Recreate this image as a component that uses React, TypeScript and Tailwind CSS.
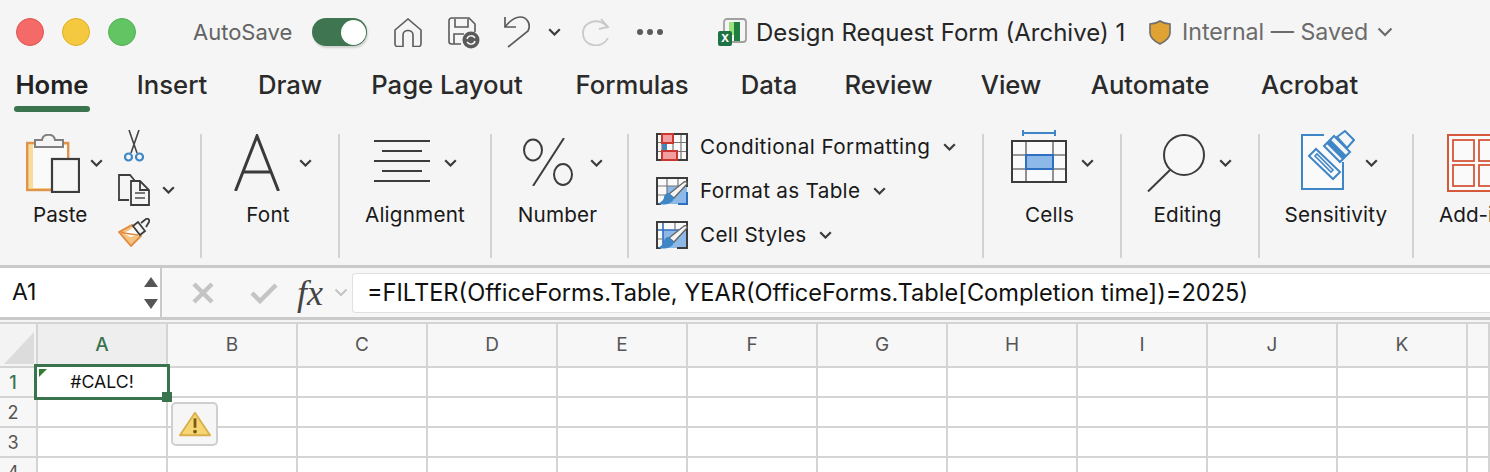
import type { ReactNode } from 'react'

const tabs = [
  { label: 'Home', width: 'w-[74px]', gap: 'ml-0', active: true },
  { label: 'Insert', width: 'w-[72px]', gap: 'ml-[47px]' },
  { label: 'Draw', width: 'w-[62px]', gap: 'ml-[51px]' },
  { label: 'Page Layout', width: 'w-[152px]', gap: 'ml-[50px]' },
  { label: 'Formulas', width: 'w-[114px]', gap: 'ml-[52px]' },
  { label: 'Data', width: 'w-[56px]', gap: 'ml-[52px]' },
  { label: 'Review', width: 'w-[87px]', gap: 'ml-[48px]' },
  { label: 'View', width: 'w-[60px]', gap: 'ml-[49px]' },
  { label: 'Automate', width: 'w-[120px]', gap: 'ml-[49px]' },
  { label: 'Acrobat', width: 'w-[97px]', gap: 'ml-[51px]' },
]

const columns = ['A', 'B', 'C', 'D', 'E', 'F', 'G', 'H', 'I', 'J', 'K', '']

function Chevron({ className = '' }: { className?: string }) {
  return (
    <svg viewBox="0 0 13 8" className={`h-[8px] w-[13px] shrink-0 ${className}`} fill="none" stroke="#3c3c3c" strokeWidth="2.2">
      <path d="M1.2 1.2 6.5 6.5l5.3-5.3" />
    </svg>
  )
}

function Divider() {
  return <div className="h-[124px] w-[2px] shrink-0 bg-[#d2d2d2]" />
}

function RibbonGroup({ width, label, iconClass, labelClass = '', icon, chevronGap }: {
  width: string
  label: string
  iconClass: string
  labelClass?: string
  icon: ReactNode
  chevronGap: string
}) {
  return (
    <div className={`flex shrink-0 flex-col ${width}`}>
      <div className={`flex h-[68px] items-start ${iconClass}`}>
        {icon}
        <Chevron className={`mt-[25px] ${chevronGap}`} />
      </div>
      <span className={`text-center text-[20.7px] leading-[26px] tracking-[0.2px] text-[#1a1a1a] ${labelClass}`}>{label}</span>
    </div>
  )
}

function StyleRow({ icon, label, tracking = 'tracking-[0.3px]' }: { icon: ReactNode; label: string; tracking?: string }) {
  return (
    <div className="flex h-[44px] items-center">
      {icon}
      <span className={`ml-[12px] whitespace-nowrap text-[20.7px] leading-[26px] text-[#1a1a1a] ${tracking}`}>{label}</span>
      <Chevron className="ml-[13px]" />
    </div>
  )
}

function PasteIcon() {
  return (
    <svg viewBox="0 0 54 59" className="h-[59px] w-[54px] shrink-0">
      <rect x="1.2" y="9" width="41" height="47" fill="#f7dc9c" stroke="#e2934a" strokeWidth="2.4" />
      <rect x="7" y="11" width="34" height="43" fill="#fafafa" />
      <path d="M9 13V6h7c1-7 12-7 13 0h8v7z" fill="#f5f5f5" stroke="#808080" strokeWidth="2" />
      <rect x="26" y="25" width="27" height="33" fill="#f7f7f7" stroke="#3c3c3c" strokeWidth="2.2" />
    </svg>
  )
}

function ScissorsIcon() {
  return (
    <svg viewBox="0 0 20 32" className="h-[32px] w-[20px]" fill="none">
      <path d="M5 0 13 23M15 0 7 23" stroke="#444" strokeWidth="1.6" />
      <circle cx="4.5" cy="27" r="3.5" stroke="#3f86c7" strokeWidth="2.2" fill="#f5f5f5" />
      <circle cx="15.5" cy="27" r="3.5" stroke="#3f86c7" strokeWidth="2.2" fill="#f5f5f5" />
    </svg>
  )
}

function CopyIcon() {
  return (
    <svg viewBox="0 0 32 32" className="h-[32px] w-[32px] shrink-0" fill="none" stroke="#3c3c3c" strokeWidth="1.8">
      <path d="M11 26H1V1h11l5 6" />
      <path d="M13 7h9l9 9v15H13z" fill="#f5f5f5" />
      <path d="M22 7v9h9" />
      <path d="M17 19h10M17 24h10" stroke="#777" strokeWidth="2" />
    </svg>
  )
}

function BrushIcon() {
  return (
    <svg viewBox="0 0 32 29" className="h-[29px] w-[32px]" fill="none">
      <path d="M1 14 14 7l9 11-10 10z" fill="#f5c27f" stroke="#e2893f" strokeWidth="1.8" />
      <path d="M3 14c5 1 8-1 12-5l6 8-9 2z" fill="#fbfbfb" />
      <path d="M3 14c5 2 12 2 17 3" stroke="#e2893f" strokeWidth="1.6" />
      <path d="m15 8 5-4 7 9-5 4z" fill="#f5f5f5" stroke="#3c3c3c" strokeWidth="1.8" />
      <path d="m23 5 5-4c2-1 4 1 3 3l-3 5" fill="#f5f5f5" stroke="#3c3c3c" strokeWidth="1.8" />
    </svg>
  )
}

function BigA() {
  return (
    <svg viewBox="0 0 46 57" className="h-[57px] w-[46px] shrink-0" fill="none" stroke="#3a3a3a" strokeWidth="3">
      <path d="M1.5 57 23 2l21.5 55M8 38h30" />
    </svg>
  )
}

function AlignIcon() {
  return (
    <svg viewBox="0 0 56 42" className="mt-[6px] h-[42px] w-[56px] shrink-0" stroke="#3c3c3c" strokeWidth="2">
      <path d="M0 1h56M8 11h40M0 21h56M8 31h40M0 41h56" />
    </svg>
  )
}

function PercentIcon() {
  return (
    <svg viewBox="0 0 50 48" className="mt-[4px] h-[48px] w-[50px] shrink-0" fill="none" stroke="#3c3c3c" strokeWidth="2">
      <ellipse cx="10" cy="12" rx="9" ry="10.5" />
      <ellipse cx="40" cy="36.5" rx="9" ry="10.5" />
      <path d="M41 0 10 48" />
    </svg>
  )
}

function CondIcon() {
  return (
    <svg viewBox="0 0 32 28" className="h-[28px] w-[32px] shrink-0">
      <rect x="1" y="1" width="30" height="26" fill="#fafafa" />
      <rect x="6" y="9" width="5" height="10" fill="#3f86c7" />
      <path d="M1 9.5h30M1 18.5h30M6 1v26M17 1v26M25 1v26" stroke="#777" strokeWidth="1.2" fill="none" />
      <rect x="1" y="1" width="30" height="26" fill="none" stroke="#3c3c3c" strokeWidth="2" />
      <rect x="6" y="1" width="11" height="9" fill="#f29ea1" stroke="#c8382e" strokeWidth="2" />
      <rect x="6" y="18" width="15" height="9" fill="#f29ea1" stroke="#c8382e" strokeWidth="2" />
    </svg>
  )
}

function TableBrushIcon({ cellStyle }: { cellStyle?: boolean }) {
  return (
    <svg viewBox="0 0 32 28" className="h-[28px] w-[32px] shrink-0">
      <rect x="1" y="1" width="30" height="26" fill="#fafafa" />
      {cellStyle ? (
        <>
          <rect x="7" y="9" width="24" height="18" fill="#8db9e8" />
          <path d="M1 9h30M7 1v26" stroke="#2f6fbf" strokeWidth="1.6" fill="none" />
          <path d="M7 18H1M19 1v8" stroke="#777" strokeWidth="1.2" fill="none" />
          <path d="M5 27H1V1h30v26h-10" stroke="#3c3c3c" strokeWidth="2" fill="none" />
        </>
      ) : (
        <>
          <rect x="11" y="9" width="20" height="18" fill="#8db9e8" />
          <path d="M1 9h30M1 18h10M11 1v26M22 1v8" stroke="#777" strokeWidth="1.2" fill="none" />
          <path d="M5 27H1V1h30v9" stroke="#3c3c3c" strokeWidth="2" fill="none" />
          <path d="M31 15v12h-9" stroke="#2f6fbf" strokeWidth="2" fill="none" />
        </>
      )}
      <path d="m13 17 15-12c2-1 3 0 3 2L18 21z" fill="#f5f5f5" stroke="#666" strokeWidth="1.4" />
      <path d="M13 16c-3 0-5 2-5 5-1 3-4 4-6 6 6 1.5 15 0 16-6z" fill="#3f86c7" />
    </svg>
  )
}

function CellsIcon() {
  return (
    <svg viewBox="0 0 56 53" className="mt-[-4px] h-[53px] w-[56px] shrink-0" fill="none">
      <path d="M12 3h32M12 0v6M44 0v6" stroke="#3f86c7" strokeWidth="2" />
      <rect x="1" y="11" width="54" height="41" fill="#fafafa" />
      <rect x="15" y="25" width="27" height="14" fill="#8db9e8" />
      <path d="M1 25h54M1 39h54M15 11v41M42 11v41" stroke="#777" strokeWidth="1.6" />
      <rect x="15" y="25" width="27" height="14" stroke="#2f6fbf" strokeWidth="2" />
      <rect x="1" y="11" width="54" height="41" stroke="#3c3c3c" strokeWidth="2" />
    </svg>
  )
}

function SearchIcon() {
  return (
    <svg viewBox="0 0 58 58" className="h-[58px] w-[58px] shrink-0" fill="none" stroke="#3c3c3c">
      <circle cx="37" cy="21" r="20" fill="#f7f7f7" strokeWidth="2" />
      <path d="M23 36 1 57.5" strokeWidth="2" />
    </svg>
  )
}

function SensitivityIcon() {
  return (
    <svg viewBox="0 0 54 60" className="mt-[-4px] h-[60px] w-[54px] shrink-0" fill="none" stroke="#3f86c7">
      <path d="M23 5H1v54h41V32" fill="#fafafa" strokeWidth="2" />
      <path d="m8 26 7-7 24 23-7 7z" fill="#fafafa" strokeWidth="2" />
      <path d="m14 26 2-2 16 16-2 2z" strokeWidth="1.6" />
      <path d="m23 16 10-10 16 16-10 10z" fill="#f5f5f5" strokeWidth="2" />
      <path d="m27.5 11.5 16 16" strokeWidth="6" />
      <path d="m36 7 8-6 9 9-7 8z" fill="#f5f5f5" strokeWidth="2" />
    </svg>
  )
}

function AddInsIcon() {
  return (
    <svg viewBox="0 0 60 58" className="h-[58px] w-[60px] shrink-0" fill="#fafafa" stroke="#d4583a">
      <rect x="1" y="1" width="58" height="56" strokeWidth="2" />
      <rect x="6" y="6" width="21" height="21" strokeWidth="1.8" />
      <rect x="32" y="6" width="21" height="21" strokeWidth="1.8" />
      <rect x="6" y="31" width="21" height="21" strokeWidth="1.8" />
      <rect x="32" y="31" width="21" height="21" strokeWidth="1.8" />
    </svg>
  )
}

function TitleBar() {
  return (
    <div className="flex h-[64px] items-center pl-[16px]">
      <div className="h-[28px] w-[28px] rounded-full border border-[#e0534c] bg-[#f36a68]" />
      <div className="ml-[18px] h-[28px] w-[28px] rounded-full border border-[#e2ac28] bg-[#f5c93f]" />
      <div className="ml-[18px] h-[28px] w-[28px] rounded-full border border-[#4fb052] bg-[#62c463]" />
      <span className="ml-[57px] w-[100px] whitespace-nowrap text-[22px] text-[#636363]">AutoSave</span>
      <div className="ml-[19px] flex h-[28px] w-[55px] items-center justify-end rounded-full bg-[#3f7651] pr-[1px] shadow-[1px_2px_2px_rgba(0,0,0,0.15)]">
        <div className="h-[25px] w-[25px] rounded-full bg-white" />
      </div>
      <svg viewBox="0 0 28 29" className="ml-[27px] h-[29px] w-[28px]" fill="none" stroke="#5b5b5b" strokeWidth="1.6">
        <path d="M1 12 14 1l13 11v14a2.5 2.5 0 0 1-2.5 2.5H19V17c0-6-10-6-10 0v11.5H3.5A2.5 2.5 0 0 1 1 26z" />
      </svg>
      <svg viewBox="0 0 32 32" className="ml-[26px] mt-[2px] h-[32px] w-[32px]" fill="none" stroke="#5b5b5b" strokeWidth="1.6">
        <path d="M13 27H3.500A2.5 2.5 0 0 1 1 24.5v-21A2.5 2.5 0 0 1 3.5 1H21l6 6v8" />
        <path d="M7 2v8h13V2M6 27V17h10" />
        <circle cx="23" cy="23" r="8.5" fill="#5b5b5b" stroke="none" />
        <path d="M19 22c1-4 6-4 8-1M27 24c-1 4-6 4-8 1" stroke="#f5f5f5" strokeWidth="1.5" />
      </svg>
      <svg viewBox="0 0 28 32" className="ml-[23px] h-[32px] w-[28px]" fill="none" stroke="#5b5b5b" strokeWidth="1.7">
        <path d="M2 1v10h11" />
        <path d="M2 11c4-5 9-10 15-10 8 0 11 8 8 14L5 31" />
      </svg>
      <Chevron className="ml-[17px]" />
      <svg viewBox="0 0 28 28" className="ml-[21px] h-[28px] w-[28px]" fill="none" stroke="#c9c9c9" strokeWidth="1.8">
        <path d="M26 10C20-1 1 2 1 15c0 15 20 16 25 5" />
        <path d="M19 1l7 8-9 2" />
      </svg>
      <div className="ml-[27px] flex gap-[4px]">
        <div className="h-[6px] w-[6px] rounded-full bg-[#5b5b5b]" />
        <div className="h-[6px] w-[6px] rounded-full bg-[#5b5b5b]" />
        <div className="h-[6px] w-[6px] rounded-full bg-[#5b5b5b]" />
      </div>
      <div className="relative ml-[55px] h-[28px] w-[29px]">
        <svg viewBox="0 0 29 28" className="h-[28px] w-[29px]">
          <rect x="6" y="1" width="22" height="23" rx="3" fill="#f5f5f5" stroke="#a0a0a0" strokeWidth="1.8" />
          <rect x="11" y="4" width="11" height="13" fill="#9be27e" />
          <rect x="16" y="4" width="6" height="19" fill="#1f7f42" />
        </svg>
        <span className="absolute bottom-0 left-0 flex h-[15px] w-[14px] items-center justify-center rounded-[2px] bg-[#1f7244] text-[11px] font-bold text-white">X</span>
      </div>
      <span className="ml-[9px] mt-[2px] w-[369px] whitespace-nowrap text-[24px] text-[#262626]">Design Request Form (Archive) 1</span>
      <svg viewBox="0 0 22 25" className="ml-[24px] h-[25px] w-[22px]">
        <path d="M11 1c3 2 6 3 10 3v9c0 6-6 9-10 11-4-2-10-5-10-11V4c4 0 7-1 10-3z" fill="#dfa233" stroke="#6e6e6e" strokeWidth="1.6" />
      </svg>
      <span className="ml-[11px] mt-[1px] w-[186px] whitespace-nowrap text-[23.2px] text-[#6b6b6b]">Internal — Saved</span>
      <svg viewBox="0 0 16 10" className="ml-[9px] h-[10px] w-[16px]" fill="none" stroke="#6b6b6b" strokeWidth="2.2">
        <path d="m1.5 1.5 6.5 6.5 6.5-6.5" />
      </svg>
    </div>
  )
}

function TabBar() {
  return (
    <div className="flex h-[50px] items-start pl-[15px]">
      {tabs.map((t) => (
        <div key={t.label} className={`flex shrink-0 flex-col items-center ${t.width} ${t.gap}`}>
          <span className={`whitespace-nowrap text-[25.7px] leading-[42px] ${t.active ? 'font-semibold text-[#222]' : 'font-medium text-[#2a2a2a]'}`}>{t.label}</span>
          {t.active && <div className="h-[6px] w-[76px] shrink-0 rounded-full bg-[#39744e]" />}
        </div>
      ))}
    </div>
  )
}

function Ribbon() {
  return (
    <div className="flex h-[154px] items-start overflow-hidden border-b-[3px] border-[#cacaca] pt-[20px]">
      <div className="flex w-[200px] shrink-0 items-start">
        <div className="ml-[26px] flex w-[76px] shrink-0 flex-col">
          <div className="flex h-[68px] items-start">
            <PasteIcon />
            <Chevron className="ml-[10px] mt-[25px]" />
          </div>
          <span className="ml-[7px] text-[20.7px] leading-[26px] text-[#1a1a1a]">Paste</span>
        </div>
        <div className="ml-[16px] flex flex-col items-start">
          <div className="ml-[6px] mt-[-4px]"><ScissorsIcon /></div>
          <div className="mt-[12px] flex items-center">
            <CopyIcon />
            <Chevron className="ml-[12px]" />
          </div>
          <div className="mt-[12px]"><BrushIcon /></div>
        </div>
      </div>
      <Divider />
      <RibbonGroup width="w-[136px]" label="Font" iconClass="pl-[32px]" labelClass="pr-[4px]" chevronGap="ml-[19px]" icon={<BigA />} />
      <Divider />
      <RibbonGroup width="w-[150px]" label="Alignment" iconClass="pl-[34px]" chevronGap="ml-[14px]" icon={<AlignIcon />} />
      <Divider />
      <RibbonGroup width="w-[135px]" label="Number" iconClass="pl-[31px]" labelClass="pr-[4px]" chevronGap="ml-[17px]" icon={<PercentIcon />} />
      <Divider />
      <div className="mt-[-9px] flex w-[353px] shrink-0 flex-col pl-[27px]">
        <StyleRow icon={<CondIcon />} label="Conditional Formatting" tracking="tracking-[0.43px]" />
        <StyleRow icon={<TableBrushIcon />} label="Format as Table" />
        <StyleRow icon={<TableBrushIcon cellStyle />} label="Cell Styles" />
      </div>
      <Divider />
      <RibbonGroup width="w-[136px]" label="Cells" iconClass="pl-[27px]" labelClass="pr-[5px]" chevronGap="ml-[14px]" icon={<CellsIcon />} />
      <Divider />
      <RibbonGroup width="w-[136px]" label="Editing" iconClass="pl-[25px]" labelClass="pr-[5px]" chevronGap="ml-[14px]" icon={<SearchIcon />} />
      <Divider />
      <RibbonGroup width="w-[152px]" label="Sensitivity" iconClass="pl-[41px]" chevronGap="ml-[10px]" icon={<SensitivityIcon />} />
      <Divider />
      <div className="flex shrink-0 flex-col pl-[25px]">
        <div className="flex h-[68px] items-start pl-[8px]"><AddInsIcon /></div>
        <span className="whitespace-nowrap text-[20.7px] leading-[26px] text-[#1a1a1a]">Add-ins</span>
      </div>
    </div>
  )
}

function FormulaBar() {
  return (
    <div className="flex h-[52px] items-stretch border-b-[3px] border-[#cacaca] bg-[#f7f7f7]">
      <div className="flex w-[162px] shrink-0 items-center justify-between border-r-[2px] border-[#cacaca] bg-white pl-[12px] pr-[2px]">
        <span className="text-[23px] text-[#111]">A1</span>
        <div className="flex flex-col gap-[12px]">
          <div className="h-0 w-0 border-x-[7px] border-b-[10px] border-x-transparent border-b-[#555]" />
          <div className="h-0 w-0 border-x-[7px] border-t-[10px] border-x-transparent border-t-[#555]" />
        </div>
      </div>
      <div className="flex flex-1 items-center pl-[30px]">
        <svg viewBox="0 0 22 22" className="h-[22px] w-[22px]" stroke="#c4c4c4" strokeWidth="4.5">
          <path d="m2 2 18 18M20 2 2 20" />
        </svg>
        <svg viewBox="0 0 28 22" className="ml-[36px] h-[22px] w-[28px]" fill="none" stroke="#c4c4c4" strokeWidth="4.5">
          <path d="m2 11 8 8L26 3" />
        </svg>
        <span className="ml-[19px] w-[28px] font-['Liberation_Serif',serif] text-[36px] italic leading-none text-[#444]">fx</span>
        <svg viewBox="0 0 14 9" className="ml-[9px] h-[9px] w-[14px]" fill="none" stroke="#c4c4c4" strokeWidth="2">
          <path d="M1.5 1.5 7 7l5.5-5.5" />
        </svg>
        <div className="ml-[4px] flex h-[40px] flex-1 items-center rounded-l-[4px] border-y border-l border-[#e0e0e0] bg-white pl-[14px]">
          <span className="whitespace-nowrap text-[23.6px] text-[#111]">=FILTER(OfficeForms.Table, YEAR(OfficeForms.Table[Completion time])=2025)</span>
        </div>
      </div>
    </div>
  )
}

function Sheet() {
  return (
    <div className="relative mt-[2px] grid grid-cols-[38px_repeat(11,130px)_1fr] grid-rows-[44px_30px_30px_30px_30px] border-t-[2px] border-[#d4d4d4] bg-white">
      <div className="flex items-end justify-end border-b-[2px] border-r-[2px] border-[#d4d4d4] bg-[#f3f3f3] p-[2px]">
        <div className="h-[32px] w-[30px] bg-[#dcdcdc] [clip-path:polygon(100%_0,100%_100%,0_100%)]" />
      </div>
      {columns.map((c, i) => (
        <div key={c || 'end'} className={`flex items-center justify-center border-b-[2px] border-r-[2px] border-[#d4d4d4] text-[19px] ${i === 0 ? 'bg-[#eeeeee] font-medium text-[#39744e]' : 'bg-[#f7f7f7] text-[#555]'}`}>
          {c}
        </div>
      ))}
      {[1, 2, 3, 4].map((row) => (
        <div key={row} className="contents">
          <div className={`flex items-center justify-center border-b-[2px] border-r-[2px] border-[#d4d4d4] bg-[#f7f7f7] pr-[10px] text-[18px] ${row === 1 ? 'font-medium text-[#39744e]' : 'text-[#555]'}`}>
            {row}
          </div>
          {columns.map((c) => (
            <div key={c} className="border-b-[2px] border-r-[2px] border-[#d4d4d4]" />
          ))}
        </div>
      ))}
      {/* selected cell and error badge sit on top of the grid */}
      <div className="absolute left-[34px] top-[40px] flex h-[36px] w-[136px] items-center justify-center border-[3px] border-[#39744e] bg-white">
        <span className="text-[17.7px] text-[#111]">#CALC!</span>
        <div className="absolute left-[2px] top-[2px] h-[8px] w-[8px] bg-[#2f7d32] [clip-path:polygon(0_0,100%_0,0_100%)]" />
        <div className="absolute bottom-[-5px] right-[-5px] h-[10px] w-[10px] bg-[#39744e]" />
      </div>
      <div className="absolute left-[171px] top-[78px] flex h-[44px] w-[47px] items-center justify-center rounded-[5px] border-[2px] border-[#cfcfcf] bg-[#f6f6f6]">
        <svg viewBox="0 0 34 28" className="h-[28px] w-[32px]">
          <path d="M17 2 33 26H1z" fill="#f6d673" stroke="#d9b04e" strokeWidth="2" strokeLinejoin="round" />
          <path d="M17 8v10" stroke="#7a5a12" strokeWidth="3" />
          <circle cx="17" cy="22" r="2" fill="#7a5a12" />
        </svg>
      </div>
    </div>
  )
}

export default function App() {
  return (
    <div className="h-[472px] w-full overflow-hidden bg-[#f5f5f5] font-['Inter','Liberation_Sans',sans-serif]">
      <TitleBar />
      <TabBar />
      <Ribbon />
      <FormulaBar />
      <Sheet />
    </div>
  )
}
